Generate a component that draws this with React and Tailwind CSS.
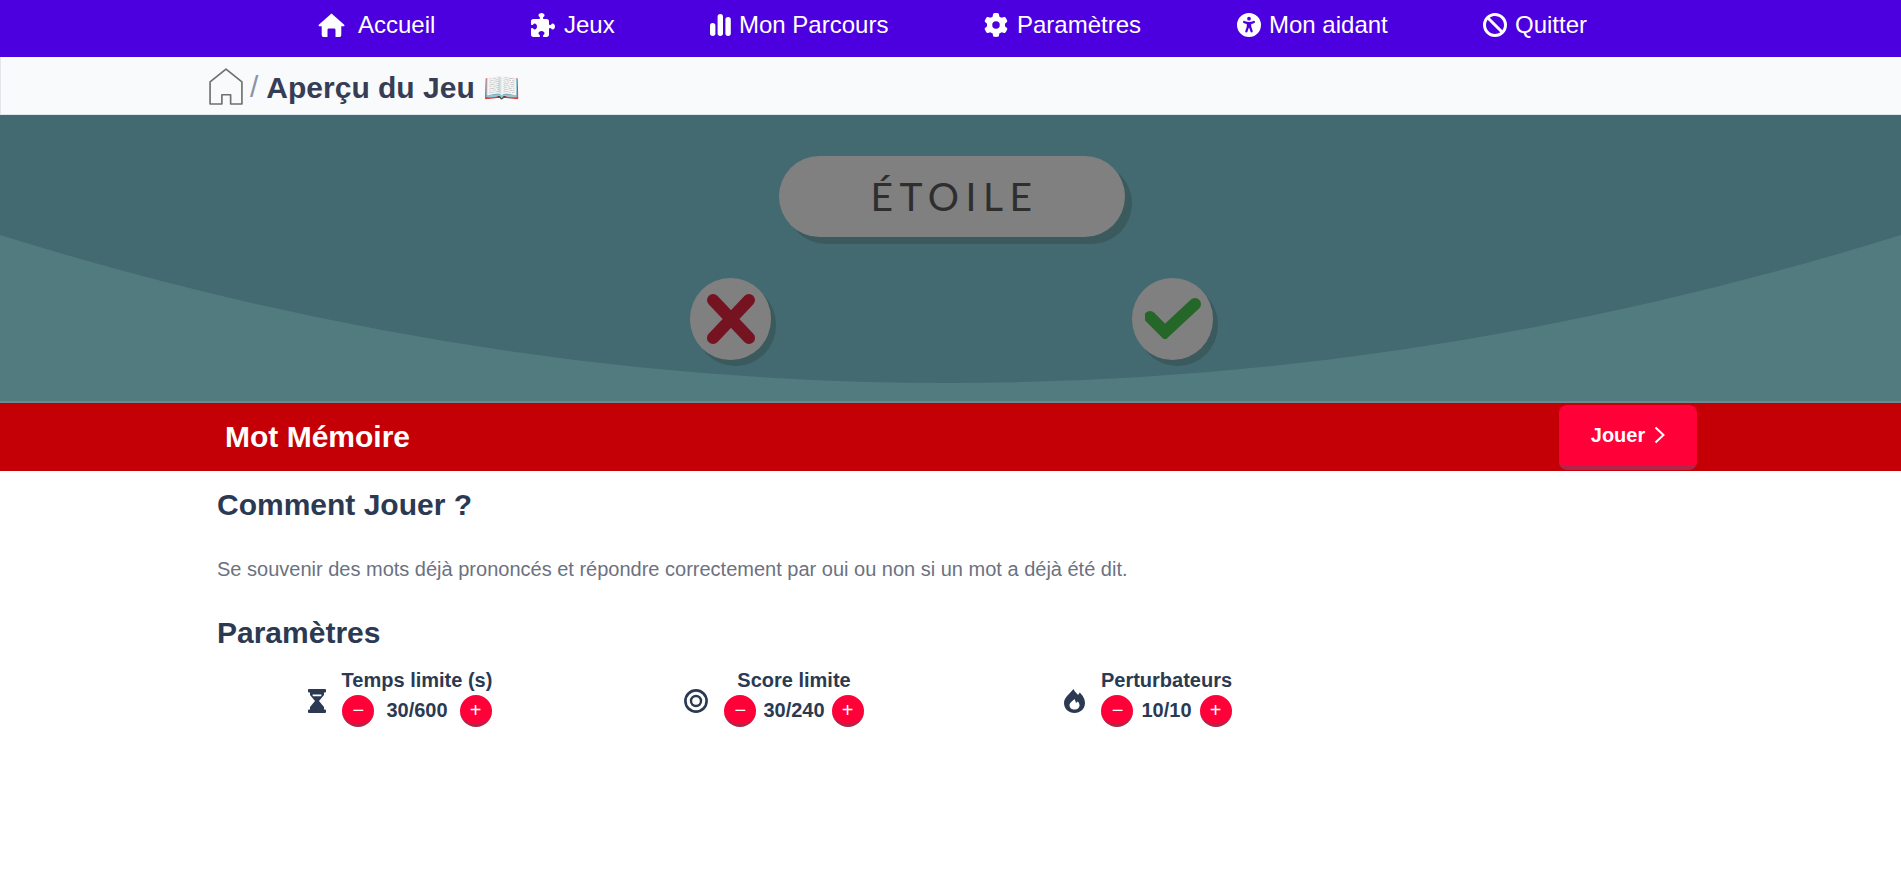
import React from "react";
import { FaPuzzlePiece, FaGear, FaUniversalAccess, FaBan } from "react-icons/fa6";

const ink = "#2b3a52";

function Home() {
  return (
    <svg viewBox="0 0 30 27" className="w-[27px] h-[24px] shrink-0" fill="white">
      <path d="M15 .5 L29 13 Q30.5 15 28 15 H26 V25 Q26 27 24 27 H19.5 V19 Q19.5 17.5 18 17.5 H12 Q10.5 17.5 10.5 19 V27 H6 Q4 27 4 25 V15 H2 Q-.5 15 1 13 Z" />
    </svg>
  );
}

function Bars() {
  return (
    <svg viewBox="0 0 21 22" className="w-[21px] h-[22px] shrink-0" fill="white">
      <rect x="0" y="9" width="5.4" height="13" rx="2.7" />
      <rect x="7.6" y="0" width="5.4" height="22" rx="2.7" />
      <rect x="15.4" y="3" width="5.4" height="19" rx="2.7" />
    </svg>
  );
}

function NavItem({ icon, label, gap, width }) {
  return (
    <a className={`flex items-center text-white text-[24px] leading-none ${gap} ${width}`}>
      {icon}
      <span>{label}</span>
    </a>
  );
}

function Hourglass() {
  return (
    <svg viewBox="0 0 18 24" className="w-[18px] h-[24px]">
      <path fill={ink} fillRule="evenodd" d="M1 0 H17 Q18 0 18 1 V2.5 Q18 3.5 17 3.5 H16 V6 L11 12 L16 18 V20.5 H17 Q18 20.5 18 21.5 V23 Q18 24 17 24 H1 Q0 24 0 23 V21.5 Q0 20.5 1 20.5 H2 V18 L7 12 L2 6 V3.5 H1 Q0 3.5 0 2.5 V1 Q0 0 1 0 Z M4.6 5.5 H13.4 V6.6 L13 7.2 H5 L4.6 6.6 Z" />
    </svg>
  );
}

function Target() {
  return (
    <svg viewBox="0 0 24 24" className="w-[24px] h-[24px]" fill="none" stroke={ink}>
      <circle cx="12" cy="12" r="10.6" strokeWidth="2.6" />
      <circle cx="12" cy="12" r="5" strokeWidth="2.4" />
    </svg>
  );
}

function Flame() {
  return (
    <svg viewBox="0 0 21 24" className="w-[21px] h-[24px]">
      <path fill={ink} fillRule="evenodd" d="M9.5 0 C10.5 2.5 12.5 4 14 6 C14.8 5.2 15.3 4.4 15.7 3.5 C18.5 6 21 10 21 14 C21 19.8 16.4 24 10.5 24 C4.6 24 0 19.8 0 14 C0 8.5 5.5 5 9.5 0 Z M10.5 10 C8.5 12 5.5 13.8 5.5 16.3 C5.5 19 7.8 20.6 10.5 20.6 C13.2 20.6 15.5 19 15.5 16.3 C15.5 15 14.8 13.6 13.8 12.6 L12 14 C11.7 12.6 11.2 11.2 10.5 10 Z" />
    </svg>
  );
}

function RoundButton({ children }) {
  return (
    <button className="w-[32px] h-[32px] shrink-0 rounded-full bg-[#ff0038] border-b-[3px] border-[#b0254a] text-white text-[20px] leading-none flex items-center justify-center">
      {children}
    </button>
  );
}

function Setting({ icon, label, value, valueGap, iconGap }) {
  return (
    <div className={`flex items-center ${iconGap}`}>
      <div className="mt-[6px] flex">{icon}</div>
      <div className="flex flex-col items-center">
        <div className="text-[20px] leading-[24px] font-bold text-[#2b3a52] whitespace-nowrap h-[24px]">{label}</div>
        <div className={`flex items-center ${valueGap} mt-[3px]`}>
          <RoundButton>−</RoundButton>
          <span className="-mt-[2px] text-[20px] font-bold text-[#2b3a52] leading-none">{value}</span>
          <RoundButton>+</RoundButton>
        </div>
      </div>
    </div>
  );
}

export default function App() {
  return (
    <div className="min-h-[887px] bg-white font-['Liberation_Sans',Arial,sans-serif]">
      <nav className="h-[57px] bg-[#4c00e0] flex items-center pl-[318px] pb-[8px]">
        <NavItem gap="gap-[13px]" width="w-[213px]" icon={<Home />} label="Accueil" />
        <NavItem gap="gap-[9px]" width="w-[179px]" icon={<FaPuzzlePiece className="w-[24px] h-[24px] shrink-0" color="white" />} label="Jeux" />
        <NavItem gap="gap-[8px]" width="w-[274px]" icon={<Bars />} label="Mon Parcours" />
        <NavItem gap="gap-[9px]" width="w-[253px]" icon={<FaGear className="w-[24px] h-[24px] shrink-0" color="white" />} label="Paramètres" />
        <NavItem gap="gap-[8px]" width="w-[246px]" icon={<FaUniversalAccess className="w-[24px] h-[24px] shrink-0" color="white" />} label="Mon aidant" />
        <NavItem gap="gap-[8px]" width="w-[110px]" icon={<FaBan className="w-[24px] h-[24px] shrink-0" color="white" />} label="Quitter" />
      </nav>

      <div className="h-[58px] bg-[#f9fafc] border-l border-b border-[#e2e5ea] flex items-center pl-[208px]">
        <svg viewBox="0 0 33 36" className="w-[34px] h-[37px] mt-[2px]" fill="none" stroke="#6f6f6f" strokeWidth="1.6" strokeLinejoin="round">
          <path d="M1 13.5 L16.5 1 L32 13.5 V35 H21 V26 H12.5 V35 H1 Z" />
        </svg>
        <span className="ml-[7px] mt-[2px] text-[30px] text-[#8a94a6] leading-none">/</span>
        <h1 className="ml-[8px] mt-[4px] text-[30px] font-bold text-[#363d55] leading-none whitespace-nowrap">Aperçu du Jeu 📖</h1>
      </div>

      <section className="relative h-[288px] bg-[#426a70] overflow-hidden flex flex-col items-center">
        <svg viewBox="0 0 1901 288" className="absolute inset-0 w-full h-full" preserveAspectRatio="none">
          <path d="M0 120 Q951 416 1901 120 V288 H0 Z" fill="#527b7f" />
          <rect x="0" y="286" width="1901" height="2" fill="#6f8a8c" />
        </svg>
        <div className="relative mt-[41px] ml-[2px] w-[346px] h-[81px] rounded-full bg-[#808080] shadow-[7px_7px_0_#3a5a5e] flex items-center justify-center text-[39px] font-['Lato',sans-serif] font-normal tracking-[6.5px] text-[#2e2e2e] leading-none pl-[6px]">
          ÉTOILE
        </div>
        <div className="relative mt-[41px] ml-[2px] w-[523px] flex justify-between">
          <div className="w-[81px] h-[82px] rounded-full bg-[#808080] shadow-[5px_6px_0_#3a5a5e] flex items-center justify-center">
            <svg viewBox="0 0 48 50" className="w-[48px] h-[50px]">
              <path d="M6 6 L42 44 M42 6 L6 44" stroke="#761320" strokeWidth="12" strokeLinecap="round" fill="none" />
            </svg>
          </div>
          <div className="w-[81px] h-[82px] rounded-full bg-[#808080] shadow-[5px_6px_0_#3a5a5e] flex items-center justify-center">
            <svg viewBox="0 0 56 42" className="w-[56px] h-[42px] mt-[-2px]">
              <path d="M5 20 L20 35 L50 7" stroke="#256728" strokeWidth="12" strokeLinecap="round" fill="none" />
            </svg>
          </div>
        </div>
      </section>

      <div className="h-[68px] bg-[#c40006] flex items-center pl-[225px]">
        <h2 className="text-[30px] font-bold text-white leading-none w-[1334px]">Mot Mémoire</h2>
        <button className="w-[138px] h-[65px] rounded-[8px] bg-[#ff0038] border-b-[4px] border-[#b0254a] text-white text-[20px] font-bold flex items-center justify-center gap-[9px]">
          Jouer
          <svg viewBox="0 0 11 18" className="w-[11px] h-[18px]" fill="none" stroke="white" strokeWidth="2">
            <path d="M1.5 1.5 L9.5 9 L1.5 16.5" />
          </svg>
        </button>
      </div>

      <main className="pl-[217px]">
        <h3 className="mt-[16px] text-[30px] leading-[36px] font-bold text-[#2b3a52]">Comment Jouer ?</h3>
        <p className="mt-[32px] text-[20px] leading-[28px] text-[#6b7280]">Se souvenir des mots déjà prononcés et répondre correctement par oui ou non si un mot a déjà été dit.</p>
        <h3 className="mt-[32px] text-[30px] leading-[36px] font-bold text-[#2b3a52]">Paramètres</h3>
        <div className="mt-[17px] -ml-[4px] w-[1122px] grid grid-cols-3 justify-items-center">
          <Setting iconGap="gap-[16px]" valueGap="gap-[12px]" value="30/600" label="Temps limite (s)" icon={<Hourglass />} />
          <Setting iconGap="gap-[16px]" valueGap="gap-[7px]" value="30/240" label="Score limite" icon={<Target />} />
          <Setting iconGap="gap-[16px]" valueGap="gap-[8px]" value="10/10" label="Perturbateurs" icon={<Flame />} />
        </div>
      </main>
    </div>
  );
}
